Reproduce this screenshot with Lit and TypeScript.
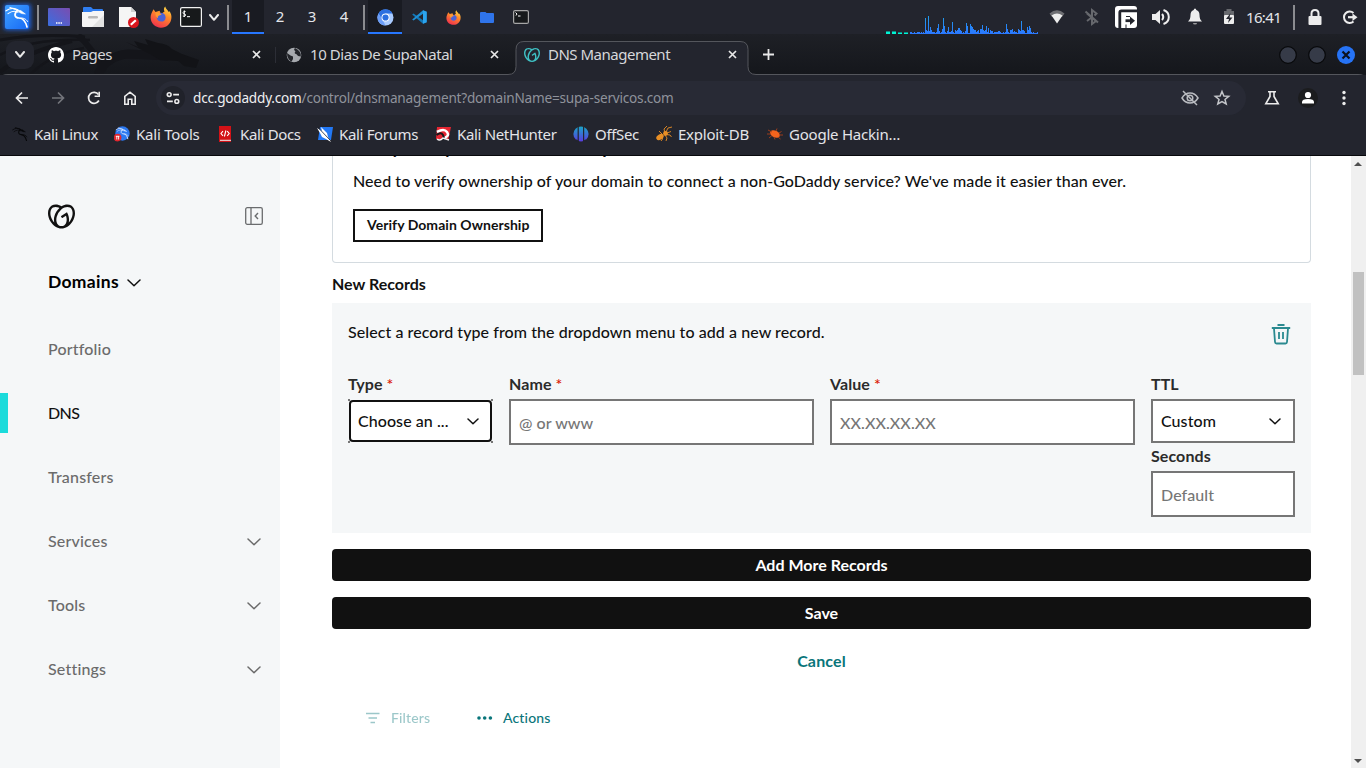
import { LitElement, html, css, svg } from "lit";
import { customElement } from "lit/decorators.js";

const GO = "M20.702 2.29c-2.494-1.554-5.778-1.187-8.706.654C9.076 1.104 5.79.736 3.3 2.29c-3.941 2.463-4.42 8.806-1.07 14.167 2.47 3.954 6.333 6.269 9.77 6.226 3.439.043 7.301-2.273 9.771-6.226 3.347-5.361 2.872-11.704-1.069-14.167zM4.042 15.328a12.838 12.838 0 01-1.546-3.541 10.12 10.12 0 01-.336-3.338c.15-1.98.956-3.524 2.27-4.345 1.315-.822 3.052-.87 4.903-.137.281.113.556.24.825.382A15.11 15.11 0 007.5 7.54c-2.035 3.255-2.655 6.878-1.945 9.765a13.247 13.247 0 01-1.514-1.98zm17.465-3.541a12.866 12.866 0 01-1.547 3.54 13.25 13.25 0 01-1.513 1.984c.635-2.589.203-5.76-1.353-8.734a.39.39 0 00-.563-.153l-4.852 3.032a.397.397 0 00-.126.546l.712 1.139a.395.395 0 00.547.126l3.145-1.965c.101.306.203.606.28.916.296 1.086.41 2.214.335 3.337-.15 1.982-.956 3.525-2.27 4.347a4.437 4.437 0 01-2.25.65h-.101a4.432 4.432 0 01-2.25-.65c-1.314-.822-2.121-2.365-2.27-4.347-.074-1.123.039-2.251.335-3.337a13.212 13.212 0 014.05-6.482 10.148 10.148 0 012.849-1.765c1.845-.733 3.586-.685 4.9.137 1.316.822 2.122 2.365 2.271 4.345a10.146 10.146 0 01-.33 3.334z";
const OCTO = "M8 0C3.58 0 0 3.58 0 8c0 3.54 2.29 6.53 5.47 7.59.4.07.55-.17.55-.38 0-.19-.01-.82-.01-1.49-2.01.37-2.53-.49-2.69-.94-.09-.23-.48-.94-.82-1.13-.28-.15-.68-.52-.01-.53.63-.01 1.08.58 1.23.82.72 1.21 1.87.87 2.33.66.07-.52.28-.87.51-1.07-1.78-.2-3.64-.89-3.64-3.95 0-.87.31-1.59.82-2.15-.08-.2-.36-1.02.08-2.12 0 0 .67-.21 2.2.82.64-.18 1.32-.27 2-.27s1.36.09 2 .27c1.53-1.04 2.2-.82 2.2-.82.44 1.1.16 1.92.08 2.12.51.56.82 1.27.82 2.15 0 3.07-1.87 3.75-3.65 3.95.29.25.54.73.54 1.48 0 1.07-.01 1.93-.01 2.2 0 .21.15.46.55.38A8.01 8.01 0 0 0 16 8c0-4.42-3.58-8-8-8z";

const icon = (w: number, h: number, box: string, body: unknown) =>
  html`<svg class="ic" width=${w} height=${h} viewBox=${box} fill="none">${body}</svg>`;

// The dragon emblem, on a 24-unit grid
const dragon = (c: string) => svg`<g stroke=${c} fill="none" stroke-linecap="round" stroke-linejoin="round">
  <path d="M1 5.8C5 3 9 2.600 13 5" stroke-width="1.300"/><path d="M3 8.600C7 5.600 10 5.600 13 7.200" stroke-width="1.100"/>
  <path d="M5 2.400L13 5.400" stroke-width="1.100"/>
  <path d="M12.500 5.400C8.500 9 9.500 12.800 14 13C18.500 13.200 20.600 16.500 22 22" stroke-width="1.700"/>
  <path d="M12 5.200L15.800 5.600L20.400 9L17 8.600L15 7.800Z" fill=${c} stroke-width=".6"/>
  <path d="M15 13.200C18 12.600 20.800 13.600 22.600 16.500" stroke-width="1"/></g>`;

const fox = (s: number) => icon(s, s, "0 0 22 22", svg`
  <defs><linearGradient id="fx" x1=".8" y1="0" x2=".3" y2="1"><stop offset="0" stop-color="#ffe14a"/><stop offset=".4" stop-color="#ff8a2a"/><stop offset="1" stop-color="#f0304e"/></linearGradient></defs>
  <path d="M3.500 3.200L5.500 6L9.500 4.800L11 8L14.500 5.500C13.400 3.400 14 1.500 15.200.4C15.800 3 18 3.800 18.700 6L19.600 5.200C21 7.500 21.700 9.500 21.400 12C21 17.700 16.600 21.700 11 21.700C5.200 21.700.7 17.400.6 11.600C.5 8.500 2.200 5.900 3.500 3.200Z" fill="url(#fx)"/>
  <path d="M11 6.800C8.600 7 6.800 8.600 6.800 11.200C6.800 13.800 8.800 15.600 11.200 15.600C13.800 15.600 15.600 13.800 15.600 11.400C15.600 9 14 7.200 11 6.800Z" fill="#4a63d8"/>
  <path d="M5.500 6.300C7.500 6 9.600 6.600 11.600 8.300C10.500 9.400 9.200 9.300 8.400 9.900C7.600 10.600 7.900 11.600 8.300 12.200C6.300 12 5.200 9 5.500 6.300Z" fill="#ff9a30"/>`);

const chev = (w: number, h: number, c: string, sw: number) =>
  icon(w, h, `0 0 ${w} ${h}`, svg`<path d=${`M1 1L${w / 2} ${h - 1.2}L${w - 1} 1`} stroke=${c} stroke-width=${sw} stroke-linecap="round" stroke-linejoin="round"/>`);

const cross = icon(9, 9, "0 0 9 9", svg`<path d="M1 1L8 8M8 1L1 8" stroke="#e8e8e8" stroke-width="1.700"/>`);

const LOAD = [2,2,1,1,2,1,1,2,2,2,1,2,1,2,1,16,4,3,18,3,7,4,2,2,2,1,2,6,10,3,1,2,5,16,8,2,1,3,7,2,2,3,12,2,1,4,3,4,6,6,4,3,1,2,1,3,11,8,1,1,10,8,7,5,4,4,2,3,4,1,5,5,9,4,3,4,8,2,6,1,4,3,3,1,2,2,2,2,3,3,2,1,1,2,1,2,10,5,2,1,4,4,5,2,3,2,2,1,5,4,3,13,4,4,3,1,1,7,4,8,6,2,1,2,1,1,1,2];

@customElement("desk-panel")
class DeskPanel extends LitElement {
  static styles = css`
    :host { display: grid; height: 34px; background: #23252e; align-items: center; color: #e4e6ea;
      font: 15px/34px "Noto Sans", sans-serif;
      grid-template-columns: 37px 11px 34px 36px 32px 30px 29px 18px 5px 32px 32px 32px 35px 5px 34px 34px 34px 34px 382px 161px 35px 33px 36px 36px 36px 23px 47px 14px 34px 25px; }
    .ic { display: block; }
    .sep { width: 2px; height: 25px; background: #8b8c90; }
    .ws, .app { box-sizing: border-box; width: 32px; height: 34px; text-align: center; line-height: 33px; }
    .app { width: 34px; display: grid; place-items: center; }
    .on { background: #191b22; border-bottom: 2px solid #2777ff; }
    .app.on { padding-top: 2px; }
    .clock { letter-spacing: -0.650px; line-height: 33px; }
  `;
  render() {
    return html`
      ${icon(36, 34, "0 0 36 34", svg`<defs><linearGradient id="kb" x1="0" y1="0" x2="1" y2="1"><stop offset="0" stop-color="#3fa0ff"/><stop offset="1" stop-color="#1769f5"/></linearGradient><filter id="gl" x="-30%" y="-30%" width="160%" height="160%"><feGaussianBlur stdDeviation="2"/></filter></defs>
        <rect x="4" y="4" width="27" height="26" rx="3" fill="#1d5fd6" filter="url(#gl)"/><rect x="5" y="5" width="24" height="24" rx="2" fill="url(#kb)"/>
        <g transform="translate(5 5)">${dragon("#fff")}</g>`)}
      <div class="sep"></div>
      ${icon(22, 18, "0 0 22 18", svg`<defs><linearGradient id="dk" x1="0" y1="1" x2="1" y2="0"><stop offset="0" stop-color="#3a6ee0"/><stop offset="1" stop-color="#7a4db0"/></linearGradient></defs><rect width="22" height="18" rx="1" fill="url(#dk)"/><path d="M8 15H9.500M10.300 15H11.800M12.600 15H14" stroke="#fff" stroke-width="1.500"/>`)}
      ${icon(22, 20, "0 0 22 20", svg`<path d="M1 1Q1 0 2 0H9L11 2H20Q21 2 21 3V9H1Z" fill="#2f7df0"/><path d="M0 5H9L11 4H22V19Q22 20 21 20H1Q0 20 0 19Z" fill="#f5f5f5"/><path d="M22 8V20H10Z" fill="#e2e2e2"/><rect x="6" y="9" width="10" height="2.500" rx="1.200" fill="#b9b9b9"/>`)}
      ${icon(22, 22, "0 0 22 22", svg`<path d="M1 1H13L18 6V21H1Z" fill="#f5f5f5"/><path d="M13 1L18 6H13Z" fill="#cfcfcf"/><circle cx="15.500" cy="16.500" r="5.500" fill="#d9161e"/><path d="M12.800 18.800L17.800 14.200" stroke="#fff" stroke-width="2.200"/>`)}
      ${fox(22)}
      ${icon(22, 20, "0 0 22 20", svg`<rect x=".6" y=".6" width="20.800" height="18.800" rx="1.500" fill="#17191b" stroke="#f2f2f2" stroke-width="1.200"/><path d="M5.500 4.500Q3 4.300 3 5.700T4.500 7Q6 7.300 5.500 8.600T2.800 9M4.300 3.400V10M7 9.700H10" stroke="#fff" stroke-width="1"/>`)}
      ${chev(10, 7, "#ececec", 2)}
      <div class="sep"></div>
      <div class="ws on">1</div><div class="ws">2</div><div class="ws">3</div><div class="ws">4</div>
      <div class="sep"></div>
      <div class="app on">${icon(17, 17, "0 0 17 17", svg`<circle cx="8.500" cy="8.500" r="8" fill="#a9cbff"/><path d="M1.500 4.500A8 8 0 0 1 15.500 4.500L8.500 4.600L5 10.500Z" fill="#2a6fe0"/><path d="M1.500 4.500L5.300 10.500L8.500 16.500A8 8 0 0 1 1.500 4.500Z" fill="#6a9df8"/><circle cx="8.500" cy="8.500" r="4" fill="#fff"/><circle cx="8.500" cy="8.500" r="3.100" fill="#2a6fe0"/>`)}</div>
      <div class="app">${icon(15, 14, "0 0 15 14", svg`<path d="M11 .2L14.700 1.800V12.200L11 13.800L1.300 5.600L.2 4.600L1.500 3.600L11 10.200Z" fill="#1278b8"/><path d="M11 .2V3.800L1.500 10.600L.2 9.500Z" fill="#1f8fd4"/><path d="M11 .2L14.700 1.800V12.200L11 13.800Z" fill="#2ca4ee"/>`)}</div>
      <div class="app">${fox(15)}</div>
      <div class="app">${icon(14, 11, "0 0 14 11", svg`<path d="M0 1Q0 0 1 0H5.500L6.500 1H13Q14 1 14 2V10Q14 11 13 11H1Q0 11 0 10Z" fill="#2f74ea"/>`)}</div>
      <div class="app">${icon(16, 14, "0 0 16 14", svg`<rect x=".6" y=".6" width="14.800" height="12.800" rx="1.500" fill="#17191b" stroke="#a6a6a6" stroke-width="1.200"/><path d="M2.500 2.500L4 4L3 5.500M5 6H7.500" stroke="#fff"/>`)}</div>
      ${icon(152, 34, "0 0 152 34", svg`<defs><linearGradient id="cpu" gradientUnits="userSpaceOnUse" x1="0" y1="14" x2="0" y2="34"><stop offset="0" stop-color="#1fa0e8"/><stop offset="1" stop-color="#2b78ff"/></linearGradient></defs>
        <path d="M0 32.500H4M6 32.500H10M12 33.500H16M18 33.500H22" stroke="#00f5d4" stroke-width="3"/><path d="M0 31.500H4M6 31.500H10M12 32.500H16M18 32.500H22" stroke="#0b8f86" stroke-width="1"/>
        ${LOAD.map((h, i) => svg`<rect x=${24 + i} y=${34 - h} width="1" height=${h} fill="url(#cpu)"/>`)}`)}
      ${icon(20, 20, "0 0 20 20", svg`<path d="M2.500 6.500Q10 0 17.500 6.500L15 10Q10 4.500 5 10Z" fill="#6d6e72"/><path d="M4.500 8.500Q10 4.600 15.500 8.500L10 16.500Z" fill="#ededed"/>`)}
      ${icon(20, 20, "0 0 20 20", svg`<path d="M5 6.500L14 14L10 17V3L14.500 6.500L12.500 8.500M9 11L5 14M3.500 4.500L16 15.500" stroke="#66686d" stroke-width="2"/>`)}
      ${icon(22, 22, "0 0 22 22", svg`<rect width="22" height="22" rx="3" fill="#fff"/><path d="M4.800 22V6.500Q4.800 4.800 6.500 4.800H22" stroke="#22242c" stroke-width="2.800"/><path d="M11 22V18.500M11 10.500H15" stroke="#22242c" stroke-width="1"/><path d="M10.500 14.700H16" stroke="#22242c" stroke-width="2.800"/><path d="M15 10.500L20 14.700L15 19Z" fill="#22242c"/>`)}
      ${icon(20, 20, "0 0 20 20", svg`<path d="M1 7H4.500L9 3V17L4.500 13H1Z" fill="#ededed"/><path d="M11 7Q13.500 10 11 13" stroke="#ededed" stroke-width="2"/><path d="M12.500 3Q17.800 4.800 17.800 10T12.500 17" stroke="#ededed" stroke-width="2"/>`)}
      ${icon(16, 20, "0 0 16 20", svg`<path d="M8 1.500Q9.200 1.500 9.300 3Q12.500 4 12.500 8Q12.500 12.500 15 14.500H1Q3.500 12.500 3.500 8Q3.500 4 6.700 3Q6.800 1.500 8 1.500Z" fill="#ededed"/><path d="M6 16H10Q10 17.500 8 17.500T6 16Z" fill="#9a9a9d"/>`)}
      ${icon(12, 16, "0 0 12 16", svg`<path d="M3.500 0H8.500V2H11V7H1V2H3.500Z" fill="#67696e"/><rect x="1" y="6" width="10" height="9" rx="1" fill="#ededed"/><path d="M7.500 4L3 10H6L5 14L9.500 8.500H6.500Z" fill="#23252e"/>`)}
      <div class="clock">16:41</div>
      <div class="sep"></div>
      ${icon(16, 18, "0 0 16 18", svg`<rect x="1.500" y="8" width="13" height="9" rx="1" fill="#ededed"/><path d="M4.500 9V5.500Q4.500 2 8 2T11.500 5.500V9" stroke="#ededed" stroke-width="2"/>`)}
      ${icon(18, 18, "0 0 18 18", svg`<path d="M12.500 5A5.700 5.700 0 1 0 12.500 13.500" stroke="#ededed" stroke-width="2"/><path d="M7 9.200H12" stroke="#ededed" stroke-width="2.200"/><path d="M11.500 5.500L16.500 9.200L11.500 13Z" fill="#ededed"/>`)}
    `;
  }
}

@customElement("tab-strip")
class TabStrip extends LitElement {
  static styles = css`
    :host { display: grid; position: relative; height: 41px; align-items: center; color: #d6d7da;
      background: linear-gradient(#1e2026, #15171c 95%); font: 15px/40px "Noto Sans", sans-serif;
      grid-template-columns: 6px 42px 24px 180px 23px 11px 24px 180px 34px 24px 180px 35px 516px 29px 29px 29px; }
    .ic { display: block; position: relative; }
    .back { position: absolute; left: 0; top: 0; }
    .menu { position: relative; width: 28px; height: 28px; border-radius: 9px; background: #23252e; display: grid; place-items: center; }
    .t { position: relative; letter-spacing: -0.500px; height: 41px; }
    .two { letter-spacing: -0.440px; }
    .div { width: 1px; height: 16px; background: #2c2e36; position: relative; }
  `;
  render() {
    return html`
      <svg class="back" width="1366" height="41" viewBox="0 0 1366 41" fill="none">
        <g stroke="#14151a" stroke-linecap="butt">
          <path d="M0 6Q40 -1 85 3" stroke-width="3"/><path d="M0 21Q30 4 90 6" stroke-width="2.500"/><path d="M0 38Q25 18 72 7" stroke-width="4"/>
          <path d="M30 41Q50 20 84 14" stroke-width="2.500"/><path d="M78 1Q92 14 104 36" stroke-width="6"/>
          <path d="M98 41Q106 22 128 20Q150 21 168 22" stroke-width="9"/>
        </g>
        <path d="M126 8L138 13L134 7L148 11L145 5L158 9Q168 10 172 15L182 20L199 26L196 34L184 32L178 27L160 26L150 20Q138 14 126 8Z" fill="#121317"/>
        <path d="M0 41V48H1366V41Q1365 40.500 1358 40.500H756Q748 40.500 748 32.500V15.500Q748 7.500 740 7.500H524Q516 7.500 516 15.500V32.500Q516 40.500 508 40.500H8Q1 40.500 0 48" fill="#23252e"/>
        <path d="M0 45Q1 40.500 8 40.500H508Q516 40.500 516 32.500V15.500Q516 7.500 524 7.500H740Q748 7.500 748 15.500V32.500Q748 40.500 756 40.500H1358Q1365 40.500 1366 45" stroke="#54565c"/>
      </svg>
      <span></span>
      <div class="menu">${chev(10, 7, "#e8e8e8", 2)}</div>
      ${icon(16, 16, "0 0 16 16", svg`<path d=${OCTO} fill="#fff"/>`)}
      <span class="t">Pages</span>
      ${cross}<span class="div"></span>
      ${icon(16, 16, "0 0 16 16", svg`<circle cx="8" cy="8" r="7.300" fill="#a6a9ae"/><path d="M1 6L4.500 8.500L7 9.500V12L5.500 14.800Q1 12 1 6ZM9 1Q7 3 9.500 4.200Q7.500 6.500 10.500 7.200Q11.500 9.500 14.800 9.500Q15.500 4 9 1Z" fill="#23252a"/>`)}
      <span class="t two">10 Dias De SupaNatal</span>
      ${cross}
      ${icon(16, 16, "0 0 24 24", svg`<path d=${GO} fill="#3fc1c4"/>`)}
      <span class="t">DNS Management</span>
      ${cross}
      ${icon(11, 11, "0 0 11 11", svg`<path d="M5.500 0V11M0 5.500H11" stroke="#e8e8e8" stroke-width="1.800"/>`)}
      ${[0, 1].map(() => icon(18, 18, "0 0 18 18", svg`<circle cx="9" cy="9" r="8.300" fill="#363b48" stroke="#08090b" stroke-width="1.200"/>`))}
      ${icon(18, 18, "0 0 18 18", svg`<circle cx="9" cy="9" r="9" fill="#2673f5"/><path d="M5.500 5.500L12.500 12.500M12.500 5.500L5.500 12.500" stroke="#0b1220" stroke-width="2.200"/>`)}
    `;
  }
}

@customElement("nav-bar")
class NavBar extends LitElement {
  static styles = css`
    :host { display: block; background: #23252e; height: 80px; border-bottom: 1px solid #08090c; color: #e3e4e8; font-family: "Noto Sans", sans-serif; }
    .ic { display: block; }
    .tools { height: 46px; display: grid; align-items: center; grid-template-columns: 14px 36px 36px 36px 34px 1090px 17px 35px 36px 32px; }
    .url { box-sizing: border-box; height: 34px; border-radius: 17px; background: #282a35; display: flex; align-items: center; padding: 0 15px 0 5px; font-size: 13.600px; color: #f0f0f2; }
    .tune { width: 24px; height: 24px; border-radius: 50%; background: #20222a; display: grid; place-items: center; margin-right: 8px; }
    .addr { flex: 1; letter-spacing: -0.220px; line-height: 34px; height: 34px; }
    .path { color: #8f929b; }
    .url .ic + .ic { margin-left: 14px; }
    .marks { height: 28px; display: grid; align-items: center; font-size: 15px; margin-top: -1px;
      grid-template-columns: 12px 102px 104px 99px 118px 138px 83px 111px 200px; }
    .mark { display: flex; align-items: center; gap: 6px; white-space: nowrap; letter-spacing: -0.340px; line-height: 20px; }
    .last { letter-spacing: -0.230px; }
  `;
  mark(name: string, body: unknown, cls = "") {
    return html`<div class="mark ${cls}">${icon(16, 16, "0 0 16 16", body)}<span>${name}</span></div>`;
  }
  render() {
    const small = (c: string) => svg`<g transform="scale(.66)">${dragon(c)}</g>`;
    return html`
      <div class="tools">
        <span></span>
        ${icon(16, 16, "0 0 16 16", svg`<path d="M14 8H3M8 2.500L2.500 8L8 13.500" stroke="#ececec" stroke-width="1.700"/>`)}
        ${icon(16, 16, "0 0 16 16", svg`<path d="M2 8H13M8 2.500L13.500 8L8 13.500" stroke="#73757b" stroke-width="1.700"/>`)}
        ${icon(16, 16, "0 0 16 16", svg`<path d="M12.900 10.500A5.500 5.500 0 1 1 12.500 4.600" stroke="#ececec" stroke-width="1.700"/><path d="M14 1.800V7H8.600V5.500H12.400V1.800Z" fill="#ececec"/>`)}
        ${icon(16, 16, "0 0 16 16", svg`<path d="M2.800 14.200V6.300L8 2.200L13.200 6.300V14.200H9.800V9.300H6.200V14.200Z" stroke="#ececec" stroke-width="1.600"/>`)}
        <div class="url">
          <div class="tune">${icon(14, 14, "0 0 14 14", svg`<g stroke="#ececec" stroke-width="1.600"><circle cx="3.200" cy="3.600" r="1.900"/><path d="M7.200 3.600H13M1 10.400H6.800"/><circle cx="10.800" cy="10.400" r="1.900"/></g>`)}</div>
          <span class="addr">dcc.godaddy.com<span class="path">/control/dnsmanagement?domainName=supa-servicos.com</span></span>
          ${icon(18, 18, "0 0 18 18", svg`<g stroke="#b9bbc0" stroke-width="1.500"><path d="M1 9Q4 4 9 4T17 9Q14 14 9 14T1 9Z"/><circle cx="9" cy="9" r="2.800"/><path d="M2 2L16 16"/></g>`)}
          ${icon(18, 18, "0 0 18 18", svg`<path d="M9 2.500L10.900 7L15.700 7.300L12 10.400L13.200 15L9 12.500L4.800 15L6 10.400L2.300 7.300L7.100 7Z" stroke="#c4c6ca" stroke-width="1.500"/>`)}
        </div>
        <span></span>
        ${icon(18, 18, "0 0 18 18", svg`<path d="M5 2.700H13M7 3V7.500L2.800 14.800H15.200L11 7.500V3" stroke="#ececec" stroke-width="1.600"/>`)}
        ${icon(20, 20, "0 0 20 20", svg`<circle cx="10" cy="10" r="10" fill="#1b1c1e"/><circle cx="10" cy="7" r="3.100" fill="#fff"/><path d="M4 15.500V14Q4 11 10 11T16 14V15.500Z" fill="#fff"/>`)}
        ${icon(18, 18, "0 0 18 18", svg`<g fill="#ececec"><circle cx="10" cy="3.500" r="1.700"/><circle cx="10" cy="9" r="1.700"/><circle cx="10" cy="14.500" r="1.700"/></g>`)}
      </div>
      <div class="marks">
        <span></span>
        ${this.mark("Kali Linux", small("#07080a"))}
        ${this.mark("Kali Tools", svg`<circle cx="8.500" cy="7.500" r="7.200" fill="#2b78f0"/><g transform="translate(1.500 .5) scale(.56)">${dragon("#d6e6ff")}</g><circle cx="3.600" cy="11.600" r="3.800" fill="#e0262e"/><path d="M1.800 10.300H5.400M2.800 10V13.500M4.600 10V13.500" stroke="#fff" stroke-width=".9"/>`, "last")}
        ${this.mark("Kali Docs", svg`<path d="M1 0H13V16H1Z" fill="#d31217"/><path d="M2 14.300H13" stroke="#eee" stroke-width="1"/><path d="M5 5.200L3 7.500L5 9.800M9.200 5.200L11.200 7.500L9.200 9.800M7.900 4.500L6.400 10.500" stroke="#fff" stroke-width="1.100"/>`)}
        ${this.mark("Kali Forums", svg`<path d="M3 1H16L14 14H1Z" fill="#2278f5"/><path d="M0 2L5 5L4 1L10 7L11 11L14 16L9 13L5 11L3 7Z" fill="#fff"/><path d="M1 1.500L13 14" stroke="#17202e" stroke-width=".8"/>`)}
        ${this.mark("Kali NetHunter", svg`<path d="M2 1H16L13.500 13H1Z" fill="#e52632"/><path d="M2 6Q9 2 12 6T9 12" stroke="#fff" stroke-width="2.600"/><path d="M1.500 9Q6 5.500 8 9T6 14" stroke="#17181c" stroke-width="2"/><path d="M2 13Q5 15.500 8 12L14 14" stroke="#f4f4f4" stroke-width="1.500"/>`)}
        ${this.mark("OffSec", svg`<defs><linearGradient id="os" x1="0" y1="0" x2="0" y2="1"><stop offset="0" stop-color="#19a6c8"/><stop offset="1" stop-color="#5a3be0"/></linearGradient></defs><circle cx="8" cy="8" r="7.600" fill="url(#os)"/><path d="M5.200 0V16M10.600 0V16" stroke="#23252e" stroke-width="1.200"/><path d="M3 14L5 16M13 14L11 16" stroke="#23252e" stroke-width="2"/>`)}
        ${this.mark("Exploit-DB", svg`<ellipse cx="4" cy="11" rx="4" ry="2.700" transform="rotate(-30 4 11)" fill="#e98f25"/><circle cx="9.500" cy="7.500" r="2.400" fill="#e98f25"/><path d="M9 7L8 3L11 0M10 6L12 2L16 1M11 7L15 5.500M10.500 8.500L14 9L15.500 11M9 9L11 12L10 15M6 9L6.500 13L5 15M6 8L3 5" stroke="#e98f25" stroke-width=".9"/>`, "last")}
        ${this.mark("Google Hackin…", svg`<ellipse cx="8" cy="8" rx="5.200" ry="3.400" transform="rotate(25 8 8)" fill="#f4641d"/><path d="M1 4L5 6M0 8L4 8M2 12L5 9.500M9 5L10 2.500M12 7L14.500 5.500M12 9L16 9M11 11L13.500 13M7 11L8 13.500" stroke="#a9401a" stroke-width=".9"/>`, "last")}
      </div>
    `;
  }
}

@customElement("side-menu")
class SideMenu extends LitElement {
  static styles = css`
    :host { display: block; width: 280px; background: #f5f7f8; color: #6b6b6b; font: 500 16px/24px Lato, sans-serif; }
    .ic { display: block; }
    .head { display: flex; align-items: center; justify-content: space-between; height: 30px; padding: 45px 16px 0 48px; }
    .group { display: flex; align-items: center; gap: 8px; margin: 39px 0 0 48px; height: 24px; color: #000; font-size: 17.500px; font-weight: 700; letter-spacing: 0.300px; }
    .group .ic { margin-top: 2px; }
    .list { margin-top: 35px; }
    .item { box-sizing: border-box; display: flex; align-items: center; justify-content: space-between; height: 40px; margin-bottom: 24px; padding: 0 19px 0 40px; border-left: 8px solid transparent; letter-spacing: 0.180px; }
    .item .ic { margin-top: 2px; }
    .item.on { color: #111; border-color: #1bdbdb; letter-spacing: -0.600px; }
  `;
  render() {
    const rows: [string, boolean][] = [["Portfolio", false], ["DNS", false], ["Transfers", false], ["Services", true], ["Tools", true], ["Settings", true]];
    return html`
      <div class="head">
        ${icon(27, 27, "0 0 24 24", svg`<path d=${GO} fill="#111"/>`)}
        ${icon(20, 20, "0 0 20 20", svg`<rect x="1.700" y="1.700" width="16.600" height="16.600" rx="1.600" stroke="#6a6c6e" stroke-width="1.300"/><path d="M7 2V18" stroke="#6a6c6e" stroke-width="1.300"/><path d="M14 7L11.200 10L14 13" stroke="#6a6c6e" stroke-width="1.400"/>`)}
      </div>
      <div class="group"><span>Domains</span>${chev(14, 8, "#111", 1.500)}</div>
      <div class="list">
        ${rows.map(([t, more]) => html`<div class="item ${t === "DNS" ? "on" : ""}"><span>${t}</span>${more ? chev(14, 8, "#6b6b6b", 1.500) : ""}</div>`)}
      </div>
    `;
  }
}

@customElement("dns-page")
class DnsPage extends LitElement {
  static styles = css`
    :host { display: block; flex: 1; overflow: hidden; background: #fff; padding: 0 40px 0 52px; color: #111; font: 500 16px/24px Lato, sans-serif; letter-spacing: 0.070px; }
    .ic { display: block; }
    .card { display: flow-root; box-sizing: border-box; border: 1px solid #d4dbe0; border-top: 0; border-radius: 0 0 4px 4px; padding: 0 20px; height: 107px; }
    .title { font-size: 18px; font-weight: 700; line-height: 24px; height: 14px; margin-top: -21px; padding-bottom: 20px; letter-spacing: 0.420px; white-space: nowrap; }
    .verify { display: inline-block; box-sizing: border-box; height: 33px; border: 2px solid #111; padding: 0 12px; font-size: 14px; line-height: 28px; font-weight: 700; margin-top: 16px; letter-spacing: 0.050px; }
    h2 { font-size: 16px; font-weight: 700; line-height: 24px; margin: 9px 0 7px; letter-spacing: 0; }
    .panel { box-sizing: border-box; height: 230px; background: #f5f7f8; padding: 17px 16px; }
    .intro { display: flex; justify-content: space-between; align-items: center; height: 24px; padding-right: 4px; margin-bottom: 28px; line-height: 22px; letter-spacing: 0.070px; }
    .intro span { padding-bottom: 1px; }
    .intro .ic { margin-top: 3px; }
    .fields { display: grid; grid-template-columns: 145px 305px 305px 144px; gap: 16px; align-items: start; }
    .lab { height: 24px; margin-bottom: 3px; font-weight: 700; color: #2b2b2b; letter-spacing: 0.080px; }
    .req { color: #db1802; font-weight: 500; }
    .box { box-sizing: border-box; border: 2px solid #767676; background: #fff; height: 46px; padding: 0 8px; line-height: 43px; color: #767676; }
    .sel { display: flex; justify-content: space-between; align-items: center; height: 44px; color: #111; padding-right: 12px; line-height: 40px; white-space: nowrap; margin-bottom: 1px; }
    .corners { width: 145px; height: 44px; box-sizing: border-box; padding: 1px; background:
      linear-gradient(#767676, #767676) 0 0 / 2px 2px no-repeat, linear-gradient(#767676, #767676) 100% 0 / 2px 2px no-repeat,
      linear-gradient(#767676, #767676) 0 100% / 2px 2px no-repeat, linear-gradient(#767676, #767676) 100% 100% / 2px 2px no-repeat; }
    .focus { height: 42px; border-color: #111; border-radius: 4px; padding: 0 11px 0 7px; }
    .btn { height: 32px; line-height: 32px; border-radius: 4px; background: #111; color: #fff; text-align: center; font-weight: 700; margin-top: 16px; letter-spacing: 0; }
    .cancel { text-align: center; margin-top: 20px; color: #09757a; font-weight: 700; letter-spacing: 0.150px; }
    .acts { display: flex; align-items: center; font-size: 14px; color: #09757a; margin: 33px 0 0 33px; letter-spacing: 0.150px; }
    .acts span { margin-left: 10px; }
    .dim { display: flex; align-items: center; opacity: 0.400; width: 112px; }
  `;
  render() {
    const arrow = chev(12, 7, "#111", 1.500);
    return html`
      <div class="card">
        <div class="title">Easily verify domain ownership</div>
        <div>Need to verify ownership of your domain to connect a non-GoDaddy service? We've made it easier than ever.</div>
        <div class="verify">Verify Domain Ownership</div>
      </div>
      <h2>New Records</h2>
      <div class="panel">
        <div class="intro"><span>Select a record type from the dropdown menu to add a new record.</span>
          ${icon(20, 22, "0 0 20 22", svg`<g stroke="#2b8a90" stroke-width="1.800"><path d="M6.500 2H13.500M.8 5H19.200"/><path d="M3 5.500L4 19Q4.100 20.500 5.500 20.500H14.500Q15.900 20.500 16 19L17 5.500"/><path d="M8 9V16M12 9V16"/></g>`)}
        </div>
        <div class="fields">
          <div><div class="lab">Type <span class="req">*</span></div><div class="corners"><div class="box sel focus"><span>Choose an ...</span>${arrow}</div></div></div>
          <div><div class="lab">Name <span class="req">*</span></div><div class="box">@ or www</div></div>
          <div><div class="lab">Value <span class="req">*</span></div><div class="box">XX.XX.XX.XX</div></div>
          <div><div class="lab">TTL</div><div class="box sel"><span>Custom</span>${arrow}</div>
            <div class="lab">Seconds</div><div class="box">Default</div></div>
        </div>
      </div>
      <div class="btn">Add More Records</div>
      <div class="btn">Save</div>
      <div class="cancel">Cancel</div>
      <div class="acts">
        <div class="dim">${icon(16, 14, "0 0 16 14", svg`<path d="M1 2.500H14.500M3.500 7H12M5.500 11.500H10" stroke="#09757a" stroke-width="1.300"/>`)}<span>Filters</span></div>
        ${icon(16, 6, "0 0 16 6", svg`<g fill="#09757a"><circle cx="2" cy="3" r="1.800"/><circle cx="7.700" cy="3" r="1.800"/><circle cx="13.400" cy="3" r="1.800"/></g>`)}<span>Actions</span>
      </div>
    `;
  }
}

@customElement("app-root")
class AppRoot extends LitElement {
  static styles = css`
    :host { display: flex; flex-direction: column; width: 1366px; height: 768px; overflow: hidden; }
    .body { flex: 1; display: flex; min-height: 0; }
    .bar { width: 15px; box-sizing: border-box; background: #f0f0f0; display: flex; flex-direction: column; align-items: center; justify-content: space-between; padding: 6px 1px 5px 0; }
    .up, .down { border: 4px solid transparent; width: 0; height: 0; }
    .up { border-bottom-color: #505050; border-top: 0; }
    .down { border-top-color: #505050; border-bottom: 0; }
    .thumb { width: 11px; height: 103px; background: #c1c1c1; margin: 106px -1px auto 0; }
  `;
  render() {
    return html`<desk-panel></desk-panel><tab-strip></tab-strip><nav-bar></nav-bar>
      <div class="body"><side-menu></side-menu><dns-page></dns-page>
        <div class="bar"><div class="up"></div><div class="thumb"></div><div class="down"></div></div>
      </div>`;
  }
}
